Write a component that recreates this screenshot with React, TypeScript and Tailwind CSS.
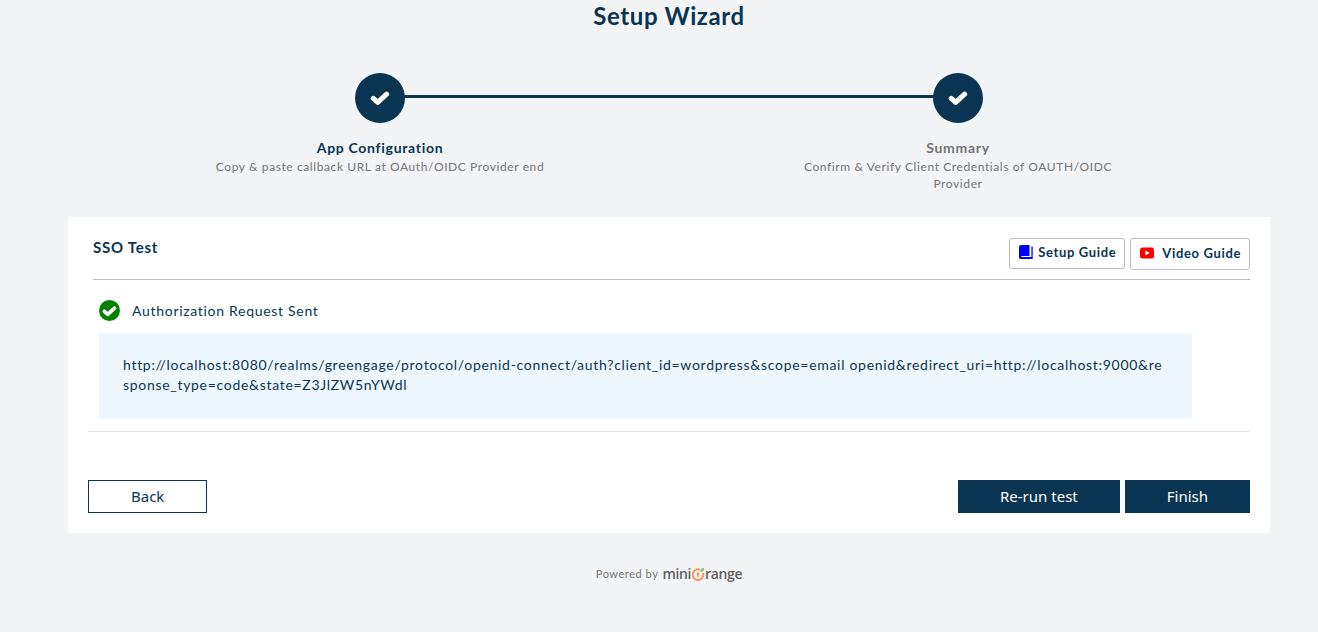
import React from 'react';

function CheckMark({ className }: { className: string }) {
  return (
    <svg viewBox="0 0 20 16" className={className} fill="none" stroke="currentColor" strokeWidth="5" strokeLinecap="round" strokeLinejoin="round" aria-hidden="true">
      <path d="M3.3 8.4 7.7 12.4 16.6 4.2" />
    </svg>
  );
}

function Step({ title, text, active, last }: { title: string; text: string; active?: boolean; last?: boolean }) {
  return (
    <li className="relative flex flex-1 flex-col items-center text-center">
      {!last && <span className="absolute top-[22px] left-1/2 h-[3px] w-full bg-[#093553]" />}
      <span className="relative flex size-[50px] items-center justify-center rounded-full bg-[#093553] text-white">
        <CheckMark className="h-4 w-5" />
      </span>
      <h2 className={active ? 'mt-[15px] text-sm leading-5 font-bold tracking-wider text-[#093553]' : 'mt-[15px] text-sm leading-5 font-bold tracking-wider text-[#757575]'}>{title}</h2>
      <p className="max-w-[350px] text-xs leading-[17px] tracking-wider text-[#757575]">{text}</p>
    </li>
  );
}

function MiniOrangeLogo() {
  return (
    <span className="flex items-center font-['Open_Sans',sans-serif] text-sm leading-4 font-semibold tracking-tight text-[#5f5f5f]">
      mini
      <svg viewBox="0 0 14 15" className="h-[15px] w-[14px]" fill="none" role="img" aria-label="O">
        <path d="M8.3 2.5A5.3 5.3 0 1 0 12.2 6.6" stroke="#fb9350" strokeWidth="1.9" strokeLinecap="round" />
        <circle cx="7" cy="7" r="1.4" fill="#fb9350" />
        <path d="M7 7v3.2" stroke="#fb9350" strokeWidth="1.2" />
        <path d="M9.4 5C9.2 2.5 10.4 1 13 .9 13.2 3.6 11.9 5.1 9.4 5Z" fill="#6fbf87" />
      </svg>
      range
    </span>
  );
}

export default function App() {
  return (
    <div className="min-h-screen bg-[#f3f4f6] pr-12 pl-[68px] font-['Lato',sans-serif] text-[#093553]">
      <h1 className="text-center text-2xl leading-8 font-bold tracking-wide">Setup Wizard</h1>

      <ol className="mt-[41px] flex min-h-[120px] px-[23px]">
        <Step title="App Configuration" text="Copy & paste callback URL at OAuth/OIDC Provider end" active />
        <Step title="Summary" text="Confirm & Verify Client Credentials of OAUTH/OIDC Provider" last />
      </ol>

      <main className="mt-6 bg-white p-5">
        <header className="ml-[5px] flex items-start justify-between border-b border-[#babdc6] pb-[9px]">
          <h2 className="text-[15px] leading-5 font-bold tracking-wider">SSO Test</h2>
          <div className="mt-px flex items-start gap-[5px] text-[13px] leading-5 font-bold tracking-wider">
            <a href="#setup-guide" className="flex h-[31px] items-center rounded-[3px] border border-[#babdc6] px-2 pb-[3px]">
              <svg viewBox="0 0 16 16" className="mr-1 size-4" aria-hidden="true">
                <path d="M3 1h8.5v11H3.4v1h10V2.5h1.3V15H2.5A1.6 1.6 0 0 1 1 13.4V3a2 2 0 0 1 2-2Z" fill="#0000ff" />
              </svg>
              Setup Guide
            </a>
            <a href="#video-guide" className="flex h-8 items-center rounded-[3px] border border-[#babdc6] px-2 pb-[3px]">
              <svg viewBox="0 0 16 16" className="mr-[7px] size-4" aria-hidden="true">
                <rect x="1" y="2.5" width="14" height="11" rx="2.5" fill="#ff0000" />
                <path d="M6.4 5.5v5L10.6 8Z" fill="#fff" />
              </svg>
              Video Guide
            </a>
          </div>
        </header>

        <section className="mt-5 border-b border-[#e6e7e9] pb-3">
          <div className="flex h-[21px] items-center gap-3 pl-[11px] text-sm leading-5 tracking-wider">
            <span className="flex size-[21px] items-center justify-center rounded-full bg-[#008000] text-white">
              <CheckMark className="h-3 w-[15px]" />
            </span>
            Authorization Request Sent
          </div>
          <p className="mt-3 mr-[58px] ml-[11px] bg-[#eef7fe] px-6 pt-[22px] pb-6 text-sm leading-5 tracking-wider break-all">
            http://localhost:8080/realms/greengage/protocol/openid-connect/auth?client_id=wordpress&amp;scope=email openid&amp;redirect_uri=http://localhost:9000&amp;response_type=code&amp;state=Z3JlZW5nYWdl
          </p>
        </section>

        <div className="mt-12 flex gap-[5px] font-['Noto_Sans',sans-serif] text-[15px] leading-5">
          <button type="button" className="mr-auto h-[33px] border border-[#093553] bg-white px-[42px] pb-0.5">Back</button>
          <button type="button" className="h-[33px] bg-[#093553] px-[42px] pb-0.5 text-white">Re-run test</button>
          <button type="button" className="h-[33px] bg-[#093553] px-[42px] pb-0.5 text-white">Finish</button>
        </div>
      </main>

      <footer className="mt-[31px] flex items-center justify-center gap-1 text-[11px] leading-5 tracking-wider text-[#757575]">
        Powered by
        <MiniOrangeLogo />
      </footer>
    </div>
  );
}
